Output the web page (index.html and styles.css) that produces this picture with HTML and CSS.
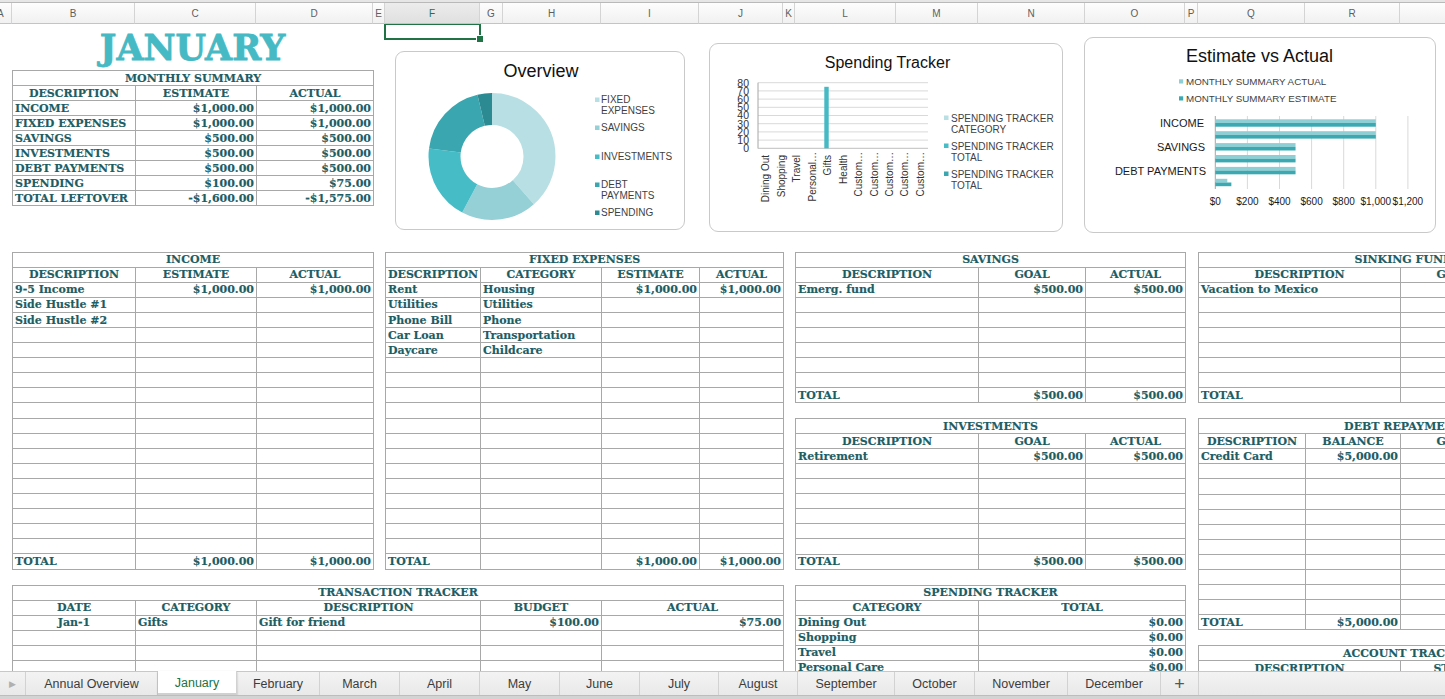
FILE: index.html
```html
<!DOCTYPE html>
<html lang="en">
<head>
<meta charset="utf-8">
<title>January Budget</title>
<link rel="stylesheet" href="styles.css">
</head>
<body>
<div class="app">
  <div class="topband"></div>
  <div class="colhead">
    <div class="ch w12 ch-a"><span>A</span></div>
    <div class="ch w123">B</div>
    <div class="ch w121">C</div>
    <div class="ch w117">D</div>
    <div class="ch w12">E</div>
    <div class="ch w95 ch-active">F</div>
    <div class="ch w23">G</div>
    <div class="ch w98">H</div>
    <div class="ch w98">I</div>
    <div class="ch w84">J</div>
    <div class="ch w12">K</div>
    <div class="ch w101">L</div>
    <div class="ch w82">M</div>
    <div class="ch w107">N</div>
    <div class="ch w100">O</div>
    <div class="ch w13">P</div>
    <div class="ch w107">Q</div>
    <div class="ch w95">R</div>
    <div class="ch w107"></div>
  </div>

  <div class="sheet">
    <div class="sel"></div>
    <div class="month-title">JANUARY</div>

    <div class="blk g-summary">
      <table class="tbl">
        <colgroup><col class="w123"><col class="w121"><col class="w117"></colgroup>
        <tr><td colspan="3" class="c">MONTHLY SUMMARY</td></tr>
        <tr><td class="c">DESCRIPTION</td><td class="c">ESTIMATE</td><td class="c">ACTUAL</td></tr>
        <tr><td>INCOME</td><td class="r">$1,000.00</td><td class="r">$1,000.00</td></tr>
        <tr><td>FIXED EXPENSES</td><td class="r">$1,000.00</td><td class="r">$1,000.00</td></tr>
        <tr><td>SAVINGS</td><td class="r">$500.00</td><td class="r">$500.00</td></tr>
        <tr><td>INVESTMENTS</td><td class="r">$500.00</td><td class="r">$500.00</td></tr>
        <tr><td>DEBT PAYMENTS</td><td class="r">$500.00</td><td class="r">$500.00</td></tr>
        <tr><td>SPENDING</td><td class="r">$100.00</td><td class="r">$75.00</td></tr>
        <tr><td>TOTAL LEFTOVER</td><td class="r">-$1,600.00</td><td class="r">-$1,575.00</td></tr>
      </table>
    </div>

    <div class="blk g-income">
      <table class="tbl">
        <colgroup><col class="w123"><col class="w121"><col class="w117"></colgroup>
        <tr><td colspan="3" class="c">INCOME</td></tr>
        <tr><td class="c">DESCRIPTION</td><td class="c">ESTIMATE</td><td class="c">ACTUAL</td></tr>
        <tr><td>9-5 Income</td><td class="r">$1,000.00</td><td class="r">$1,000.00</td></tr>
        <tr><td>Side Hustle #1</td><td></td><td></td></tr>
        <tr><td>Side Hustle #2</td><td></td><td></td></tr>
        <tr><td></td><td></td><td></td></tr>
        <tr><td></td><td></td><td></td></tr>
        <tr><td></td><td></td><td></td></tr>
        <tr><td></td><td></td><td></td></tr>
        <tr><td></td><td></td><td></td></tr>
        <tr><td></td><td></td><td></td></tr>
        <tr><td></td><td></td><td></td></tr>
        <tr><td></td><td></td><td></td></tr>
        <tr><td></td><td></td><td></td></tr>
        <tr><td></td><td></td><td></td></tr>
        <tr><td></td><td></td><td></td></tr>
        <tr><td></td><td></td><td></td></tr>
        <tr><td></td><td></td><td></td></tr>
        <tr><td></td><td></td><td></td></tr>
        <tr><td></td><td></td><td></td></tr>
        <tr><td>TOTAL</td><td class="r">$1,000.00</td><td class="r">$1,000.00</td></tr>
      </table>
    </div>

    <div class="blk g-fixed">
      <table class="tbl">
        <colgroup><col class="w95"><col class="w121"><col class="w98"><col class="w84"></colgroup>
        <tr><td colspan="4" class="c">FIXED EXPENSES</td></tr>
        <tr><td class="c">DESCRIPTION</td><td class="c">CATEGORY</td><td class="c">ESTIMATE</td><td class="c">ACTUAL</td></tr>
        <tr><td>Rent</td><td>Housing</td><td class="r">$1,000.00</td><td class="r">$1,000.00</td></tr>
        <tr><td>Utilities</td><td>Utilities</td><td></td><td></td></tr>
        <tr><td>Phone Bill</td><td>Phone</td><td></td><td></td></tr>
        <tr><td>Car Loan</td><td>Transportation</td><td></td><td></td></tr>
        <tr><td>Daycare</td><td>Childcare</td><td></td><td></td></tr>
        <tr><td></td><td></td><td></td><td></td></tr>
        <tr><td></td><td></td><td></td><td></td></tr>
        <tr><td></td><td></td><td></td><td></td></tr>
        <tr><td></td><td></td><td></td><td></td></tr>
        <tr><td></td><td></td><td></td><td></td></tr>
        <tr><td></td><td></td><td></td><td></td></tr>
        <tr><td></td><td></td><td></td><td></td></tr>
        <tr><td></td><td></td><td></td><td></td></tr>
        <tr><td></td><td></td><td></td><td></td></tr>
        <tr><td></td><td></td><td></td><td></td></tr>
        <tr><td></td><td></td><td></td><td></td></tr>
        <tr><td></td><td></td><td></td><td></td></tr>
        <tr><td></td><td></td><td></td><td></td></tr>
        <tr><td>TOTAL</td><td></td><td class="r">$1,000.00</td><td class="r">$1,000.00</td></tr>
      </table>
    </div>

    <div class="blk g-trans">
      <table class="tbl">
        <colgroup><col class="w123"><col class="w121"><col class="w224"><col class="w121"><col class="w182"></colgroup>
        <tr><td colspan="5" class="c">TRANSACTION TRACKER</td></tr>
        <tr><td class="c">DATE</td><td class="c">CATEGORY</td><td class="c">DESCRIPTION</td><td class="c">BUDGET</td><td class="c">ACTUAL</td></tr>
        <tr><td class="c">Jan-1</td><td>Gifts</td><td>Gift for friend</td><td class="r">$100.00</td><td class="r">$75.00</td></tr>
        <tr><td></td><td></td><td></td><td></td><td></td></tr>
        <tr><td></td><td></td><td></td><td></td><td></td></tr>
        <tr><td></td><td></td><td></td><td></td><td></td></tr>
      </table>
    </div>

    <div class="blk g-savings">
      <table class="tbl">
        <colgroup><col class="w183"><col class="w107"><col class="w100"></colgroup>
        <tr><td colspan="3" class="c">SAVINGS</td></tr>
        <tr><td class="c">DESCRIPTION</td><td class="c">GOAL</td><td class="c">ACTUAL</td></tr>
        <tr><td>Emerg. fund</td><td class="r">$500.00</td><td class="r">$500.00</td></tr>
        <tr><td></td><td></td><td></td></tr>
        <tr><td></td><td></td><td></td></tr>
        <tr><td></td><td></td><td></td></tr>
        <tr><td></td><td></td><td></td></tr>
        <tr><td></td><td></td><td></td></tr>
        <tr><td></td><td></td><td></td></tr>
        <tr><td>TOTAL</td><td class="r">$500.00</td><td class="r">$500.00</td></tr>
      </table>
    </div>

    <div class="blk g-invest">
      <table class="tbl">
        <colgroup><col class="w183"><col class="w107"><col class="w100"></colgroup>
        <tr><td colspan="3" class="c">INVESTMENTS</td></tr>
        <tr><td class="c">DESCRIPTION</td><td class="c">GOAL</td><td class="c">ACTUAL</td></tr>
        <tr><td>Retirement</td><td class="r">$500.00</td><td class="r">$500.00</td></tr>
        <tr><td></td><td></td><td></td></tr>
        <tr><td></td><td></td><td></td></tr>
        <tr><td></td><td></td><td></td></tr>
        <tr><td></td><td></td><td></td></tr>
        <tr><td></td><td></td><td></td></tr>
        <tr><td></td><td></td><td></td></tr>
        <tr><td>TOTAL</td><td class="r">$500.00</td><td class="r">$500.00</td></tr>
      </table>
    </div>

    <div class="blk g-spend">
      <table class="tbl">
        <colgroup><col class="w183"><col class="w207"></colgroup>
        <tr><td colspan="2" class="c">SPENDING TRACKER</td></tr>
        <tr><td class="c">CATEGORY</td><td class="c">TOTAL</td></tr>
        <tr><td>Dining Out</td><td class="r">$0.00</td></tr>
        <tr><td>Shopping</td><td class="r">$0.00</td></tr>
        <tr><td>Travel</td><td class="r">$0.00</td></tr>
        <tr><td>Personal Care</td><td class="r">$0.00</td></tr>
      </table>
    </div>

    <div class="blk g-sinking">
      <table class="tbl">
        <colgroup><col class="w202"><col class="w107"><col class="w109"></colgroup>
        <tr><td colspan="3" class="c">SINKING FUNDS</td></tr>
        <tr><td class="c">DESCRIPTION</td><td class="c">GOAL</td><td class="c">ACTUAL</td></tr>
        <tr><td>Vacation to Mexico</td><td></td><td></td></tr>
        <tr><td></td><td></td><td></td></tr>
        <tr><td></td><td></td><td></td></tr>
        <tr><td></td><td></td><td></td></tr>
        <tr><td></td><td></td><td></td></tr>
        <tr><td></td><td></td><td></td></tr>
        <tr><td></td><td></td><td></td></tr>
        <tr class="dark-top"><td>TOTAL</td><td></td><td></td></tr>
      </table>
    </div>

    <div class="blk g-debt">
      <table class="tbl">
        <colgroup><col class="w107"><col class="w95"><col class="w107"><col class="w109"></colgroup>
        <tr><td colspan="4" class="c">DEBT REPAYMENTS</td></tr>
        <tr><td class="c">DESCRIPTION</td><td class="c">BALANCE</td><td class="c">GOAL</td><td class="c">ACTUAL</td></tr>
        <tr><td>Credit Card</td><td class="r">$5,000.00</td><td></td><td></td></tr>
        <tr><td></td><td></td><td></td><td></td></tr>
        <tr><td></td><td></td><td></td><td></td></tr>
        <tr><td></td><td></td><td></td><td></td></tr>
        <tr><td></td><td></td><td></td><td></td></tr>
        <tr><td></td><td></td><td></td><td></td></tr>
        <tr><td></td><td></td><td></td><td></td></tr>
        <tr><td></td><td></td><td></td><td></td></tr>
        <tr><td></td><td></td><td></td><td></td></tr>
        <tr><td></td><td></td><td></td><td></td></tr>
        <tr><td></td><td></td><td></td><td></td></tr>
        <tr><td>TOTAL</td><td class="r">$5,000.00</td><td></td><td></td></tr>
      </table>
    </div>

    <div class="blk g-account">
      <table class="tbl">
        <colgroup><col class="w202"><col class="w107"><col class="w109"></colgroup>
        <tr><td colspan="3" class="c">ACCOUNT TRACKER</td></tr>
        <tr><td class="c">DESCRIPTION</td><td class="c">START</td><td class="c">END</td></tr>
      </table>
    </div>

    <!-- Chart: Overview -->
    <div class="chart chart-overview">
      <svg width="290" height="179" viewBox="0 0 290 179">
        <g transform="translate(-395,-51)">
          <text class="ctitle" x="540" y="75.5" font-size="18" text-anchor="middle">Overview</text>
          <g transform="rotate(-90 491 155.5)" fill="none" stroke-width="32">
            <circle cx="491" cy="155.5" r="47.5" stroke="#b8e0e4" stroke-dasharray="114.79 298.45" stroke-dashoffset="0"/>
            <circle cx="491" cy="155.5" r="47.5" stroke="#94d0d6" stroke-dasharray="57.39 298.45" stroke-dashoffset="-114.79"/>
            <circle cx="491" cy="155.5" r="47.5" stroke="#46bcc7" stroke-dasharray="57.39 298.45" stroke-dashoffset="-172.18"/>
            <circle cx="491" cy="155.5" r="47.5" stroke="#3aa7b0" stroke-dasharray="57.39 298.45" stroke-dashoffset="-229.57"/>
            <circle cx="491" cy="155.5" r="47.5" stroke="#2c8a92" stroke-dasharray="11.49 298.45" stroke-dashoffset="-286.96"/>
          </g>
          <g class="legend" font-size="10">
            <rect x="594" y="96.5" width="4.5" height="4.5" fill="#b8e0e4"/>
            <text x="600" y="102.3">FIXED</text>
            <text x="600" y="113.3">EXPENSES</text>
            <rect x="594" y="124.5" width="4.5" height="4.5" fill="#94d0d6"/>
            <text x="600" y="130">SAVINGS</text>
            <rect x="594" y="153.5" width="4.5" height="4.5" fill="#46bcc7"/>
            <text x="600" y="159">INVESTMENTS</text>
            <rect x="594" y="181.5" width="4.5" height="4.5" fill="#3aa7b0"/>
            <text x="600" y="187.3">DEBT</text>
            <text x="600" y="198.3">PAYMENTS</text>
            <rect x="594" y="209.5" width="4.5" height="4.5" fill="#2c8a92"/>
            <text x="600" y="215">SPENDING</text>
          </g>
        </g>
      </svg>
    </div>

    <!-- Chart: Spending Tracker -->
    <div class="chart chart-spending">
      <svg width="354" height="189" viewBox="0 0 354 189">
        <g transform="translate(-709,-43)">
          <text class="ctitle" x="886.5" y="66.5" font-size="16" text-anchor="middle">Spending Tracker</text>
          <g stroke="#d9d9d9" stroke-width="1">
            <line x1="757" y1="81.7" x2="927" y2="81.7"/>
            <line x1="757" y1="89.9" x2="927" y2="89.9"/>
            <line x1="757" y1="98.1" x2="927" y2="98.1"/>
            <line x1="757" y1="106.3" x2="927" y2="106.3"/>
            <line x1="757" y1="114.5" x2="927" y2="114.5"/>
            <line x1="757" y1="122.7" x2="927" y2="122.7"/>
            <line x1="757" y1="130.9" x2="927" y2="130.9"/>
            <line x1="757" y1="139.1" x2="927" y2="139.1"/>
          </g>
          <line x1="757" y1="81.7" x2="757" y2="147.5" stroke="#a6a6a6"/>
          <line x1="757" y1="147.3" x2="927" y2="147.3" stroke="#bfbfbf"/>
          <rect x="823.3" y="85.8" width="4.4" height="61.5" fill="#43bac4"/>
          <g class="axis" font-size="10.5" text-anchor="end">
            <text x="748" y="85.5">80</text>
            <text x="748" y="93.7">70</text>
            <text x="748" y="101.9">60</text>
            <text x="748" y="110.1">50</text>
            <text x="748" y="118.3">40</text>
            <text x="748" y="126.5">30</text>
            <text x="748" y="134.7">20</text>
            <text x="748" y="142.9">10</text>
            <text x="748" y="151.1">0</text>
          </g>
          <g class="axis" font-size="10" text-anchor="end">
            <text transform="translate(768.3,154) rotate(-90)">Dining Out</text>
            <text transform="translate(783.8,154) rotate(-90)">Shopping</text>
            <text transform="translate(799.2,154) rotate(-90)">Travel</text>
            <text transform="translate(814.7,151) rotate(-90)">Personal…</text>
            <text transform="translate(830.1,154) rotate(-90)">Gifts</text>
            <text transform="translate(845.6,154) rotate(-90)">Health</text>
            <text transform="translate(861.1,151) rotate(-90)">Custom…</text>
            <text transform="translate(876.5,151) rotate(-90)">Custom…</text>
            <text transform="translate(892,151) rotate(-90)">Custom…</text>
            <text transform="translate(907.4,151) rotate(-90)">Custom…</text>
            <text transform="translate(922.9,151) rotate(-90)">Custom…</text>
          </g>
          <g class="legend" font-size="10">
            <rect x="943" y="114.5" width="4.5" height="4.5" fill="#b8e0e4"/>
            <text x="950" y="120.5">SPENDING TRACKER</text>
            <text x="950" y="131.5">CATEGORY</text>
            <rect x="943" y="142.5" width="4.5" height="4.5" fill="#46bcc7"/>
            <text x="950" y="148.5">SPENDING TRACKER</text>
            <text x="950" y="159.5">TOTAL</text>
            <rect x="943" y="170.5" width="4.5" height="4.5" fill="#3aa7b0"/>
            <text x="950" y="176.5">SPENDING TRACKER</text>
            <text x="950" y="187.5">TOTAL</text>
          </g>
        </g>
      </svg>
    </div>

    <!-- Chart: Estimate vs Actual -->
    <div class="chart chart-estimate">
      <svg width="352" height="196" viewBox="0 0 352 196">
        <g transform="translate(-1084,-37)">
          <text class="ctitle" x="1258.5" y="61" font-size="18" text-anchor="middle">Estimate vs Actual</text>
          <g class="legend" font-size="9.8">
            <rect x="1178" y="78.3" width="4.2" height="4.2" fill="#8dcfd5"/>
            <text x="1185" y="84">MONTHLY SUMMARY ACTUAL</text>
            <rect x="1178" y="95.3" width="4.2" height="4.2" fill="#3aa9b2"/>
            <text x="1185" y="101">MONTHLY SUMMARY ESTIMATE</text>
          </g>
          <g stroke="#d9d9d9">
            <line x1="1246.4" y1="115" x2="1246.4" y2="188"/>
            <line x1="1278.5" y1="115" x2="1278.5" y2="188"/>
            <line x1="1310.6" y1="115" x2="1310.6" y2="188"/>
            <line x1="1342.7" y1="115" x2="1342.7" y2="188"/>
            <line x1="1374.8" y1="115" x2="1374.8" y2="188"/>
            <line x1="1406.9" y1="115" x2="1406.9" y2="188"/>
          </g>
          <line x1="1214.3" y1="115" x2="1214.3" y2="188" stroke="#a6a6a6"/>
          <g>
            <rect x="1214.3" y="118.3" width="160.5" height="3.7" fill="#8dcfd5"/>
            <rect x="1214.3" y="122" width="160.5" height="3.7" fill="#3aa9b2"/>
            <rect x="1214.3" y="130.2" width="160.5" height="3.7" fill="#8dcfd5"/>
            <rect x="1214.3" y="133.9" width="160.5" height="3.7" fill="#3aa9b2"/>
            <rect x="1214.3" y="142.1" width="80.25" height="3.7" fill="#8dcfd5"/>
            <rect x="1214.3" y="145.8" width="80.25" height="3.7" fill="#3aa9b2"/>
            <rect x="1214.3" y="154" width="80.25" height="3.7" fill="#8dcfd5"/>
            <rect x="1214.3" y="157.7" width="80.25" height="3.7" fill="#3aa9b2"/>
            <rect x="1214.3" y="165.9" width="80.25" height="3.7" fill="#8dcfd5"/>
            <rect x="1214.3" y="169.6" width="80.25" height="3.7" fill="#3aa9b2"/>
            <rect x="1214.3" y="177.8" width="12" height="3.7" fill="#8dcfd5"/>
            <rect x="1214.3" y="181.5" width="16.05" height="3.7" fill="#3aa9b2"/>
          </g>
          <g class="axis dark" font-size="11" text-anchor="end">
            <text x="1203" y="126">INCOME</text>
            <text x="1204" y="149.8">SAVINGS</text>
            <text x="1205" y="173.6">DEBT PAYMENTS</text>
          </g>
          <g class="axis dark" font-size="10" text-anchor="middle">
            <text x="1214.3" y="204">$0</text>
            <text x="1246.4" y="204">$200</text>
            <text x="1278.5" y="204">$400</text>
            <text x="1310.6" y="204">$600</text>
            <text x="1342.7" y="204">$800</text>
            <text x="1374.8" y="204">$1,000</text>
            <text x="1406.9" y="204">$1,200</text>
          </g>
        </g>
      </svg>
    </div>
  </div>

  <div class="tabs">
    <div class="tab tab-nav"><span class="arrow">▶</span></div>
    <div class="tab w132">Annual Overview</div>
    <div class="tab w79 tab-active">January</div>
    <div class="tab w83">February</div>
    <div class="tab w80">March</div>
    <div class="tab w80">April</div>
    <div class="tab w80">May</div>
    <div class="tab w80">June</div>
    <div class="tab w79">July</div>
    <div class="tab w79">August</div>
    <div class="tab w97">September</div>
    <div class="tab w80">October</div>
    <div class="tab w93">November</div>
    <div class="tab w93">December</div>
    <div class="tab w38 tab-add">+</div>
  </div>
  <div class="bottomband"></div>
</div>
</body>
</html>
```

FILE: styles.css
```css
* { box-sizing: border-box; }
html, body { margin: 0; padding: 0; }
body {
  width: 1445px;
  height: 699px;
  overflow: hidden;
  background: #ffffff;
  font-family: "Liberation Sans", Arial, sans-serif;
}
.app {
  display: flex;
  flex-direction: column;
  width: 1445px;
  height: 699px;
  overflow: hidden;
}

/* widths */
.w12 { width: 12px; } .w13 { width: 13px; } .w23 { width: 23px; } .w38 { width: 38px; }
.w79 { width: 79px; } .w80 { width: 80px; } .w82 { width: 82px; } .w83 { width: 83px; }
.w84 { width: 84px; } .w93 { width: 93px; } .w95 { width: 95px; } .w97 { width: 97px; }
.w98 { width: 98px; } .w100 { width: 100px; } .w101 { width: 101px; } .w107 { width: 107px; }
.w109 { width: 109px; } .w117 { width: 117px; } .w121 { width: 121px; } .w123 { width: 123px; }
.w132 { width: 132px; } .w182 { width: 182px; } .w183 { width: 183px; } .w202 { width: 202px; }
.w207 { width: 207px; } .w224 { width: 224px; }

/* top chrome */
.topband {
  flex: none;
  height: 3px;
  background: #e6e6e6;
  border-bottom: 1px solid #b9b9b9;
}
.colhead {
  flex: none;
  display: flex;
  height: 21px;
  overflow: hidden;
}
.ch {
  flex: none;
  height: 21px;
  display: flex;
  align-items: center;
  justify-content: center;
  font-size: 10px;
  color: #5e5e5e;
  background: linear-gradient(#fdfdfd, #f1f1f1);
  border-right: 1px solid #d4d4d4;
  border-bottom: 1px solid #c4c4c4;
  overflow: hidden;
}
.ch-a { justify-content: flex-start; }
.ch-a span { margin-left: -3px; }
.ch-active {
  background: linear-gradient(#ececec, #e0e0e0);
  color: #217346;
}

/* sheet grid */
.sheet {
  flex: none;
  position: relative;
  height: 647px;
  overflow: hidden;
  display: grid;
  grid-template-columns: 12px 123px 121px 117px 12px 95px 23px 98px 98px 84px 12px 101px 82px 107px 100px 13px 107px 95px 107px 109px;
  grid-template-rows: 16px 30px repeat(44, 15.15px);
}

.sel {
  grid-column: 6;
  grid-row: 1;
  margin: -1px -1px 0 -1px;
  border: 2px solid #217346;
  position: relative;
}
.sel::after {
  content: "";
  position: absolute;
  right: -5px;
  bottom: -5px;
  width: 6px;
  height: 6px;
  background: #217346;
  border: 1px solid #ffffff;
}

.month-title {
  grid-column: 2 / 5;
  grid-row: 1 / 3;
  text-align: center;
  font-family: "DejaVu Serif", "Liberation Serif", serif;
  font-weight: bold;
  font-size: 35px;
  line-height: 46px;
  padding-top: 1px;
  color: #45b9c4;
  -webkit-text-stroke: 0.8px #45b9c4;
}

.blk { min-width: 0; min-height: 0; }
.g-summary { grid-column: 2 / 5; grid-row: 3 / 12; }
.g-income  { grid-column: 2 / 5; grid-row: 15 / 36; }
.g-fixed   { grid-column: 6 / 11; grid-row: 15 / 36; }
.g-trans   { grid-column: 2 / 11; grid-row: 37 / 43; }
.g-savings { grid-column: 12 / 16; grid-row: 15 / 25; }
.g-invest  { grid-column: 12 / 16; grid-row: 26 / 36; }
.g-spend   { grid-column: 12 / 16; grid-row: 37 / 43; }
.g-sinking { grid-column: 17 / 21; grid-row: 15 / 25; }
.g-debt    { grid-column: 17 / 21; grid-row: 26 / 40; }
.g-account { grid-column: 17 / 21; grid-row: 41 / 43; }

.tbl {
  width: 100%;
  height: 100%;
  border-collapse: collapse;
  table-layout: fixed;
  font-family: "DejaVu Serif", "Liberation Serif", serif;
  font-weight: bold;
  font-size: 11px;
  color: #1d5d64;
  -webkit-text-stroke: 0.15px #1d5d64;
}
.tbl td {
  border: 1px solid #a8a8a8;
  padding: 0 2px 0 2px;
  height: 15px;
  line-height: 13px;
  white-space: nowrap;
  overflow: hidden;
  vertical-align: middle;
}
.tbl td.c { text-align: center; }
.tbl td.r { text-align: right; }
.tbl tr.dark-top td { border-top: 1px solid #6f6f6f; }

/* charts (floating objects over the sheet) */
.chart {
  position: absolute;
  background: #ffffff;
  border: 1px solid #c9c9c9;
  border-radius: 9px;
  overflow: hidden;
}
.chart svg { display: block; }
.chart text { font-family: "Liberation Sans", Arial, sans-serif; }
.chart .ctitle { fill: #111111; }
.chart .legend text { fill: #3f3f3f; }
.chart .axis text { fill: #333333; }
.chart .axis.dark text { fill: #1a1a1a; }
.chart-overview { left: 395px; top: 27px; width: 290px; height: 179px; }
.chart-spending { left: 709px; top: 19px; width: 354px; height: 189px; }
.chart-estimate { left: 1084px; top: 13px; width: 352px; height: 196px; }

/* sheet tabs */
.tabs {
  flex: none;
  display: flex;
  height: 24px;
  background: linear-gradient(#f3f3f3, #e9e9e9);
  border-top: 1px solid #c8c8c8;
  font-size: 12.5px;
  color: #3c3c3c;
}
.tab {
  flex: none;
  display: flex;
  align-items: center;
  justify-content: center;
  border-right: 1px solid #d2d2d2;
  height: 100%;
  padding-top: 1px;
}
.tab-nav { width: 26px; }
.tab-nav .arrow { font-size: 9px; color: #b0b0b0; }
.tab-active {
  background: #ffffff;
  color: #217346;
  border-bottom: 2px solid #d0d0d0;
  box-shadow: 0 1px 2px rgba(0, 0, 0, 0.25);
  margin-top: -1px;
  height: calc(100% + 1px);
}
.tab-add { font-size: 18px; color: #555555; }
.bottomband {
  flex: none;
  height: 4px;
  background: #d3d3d3;
  border-top: 1px solid #bdbdbd;
}
```
